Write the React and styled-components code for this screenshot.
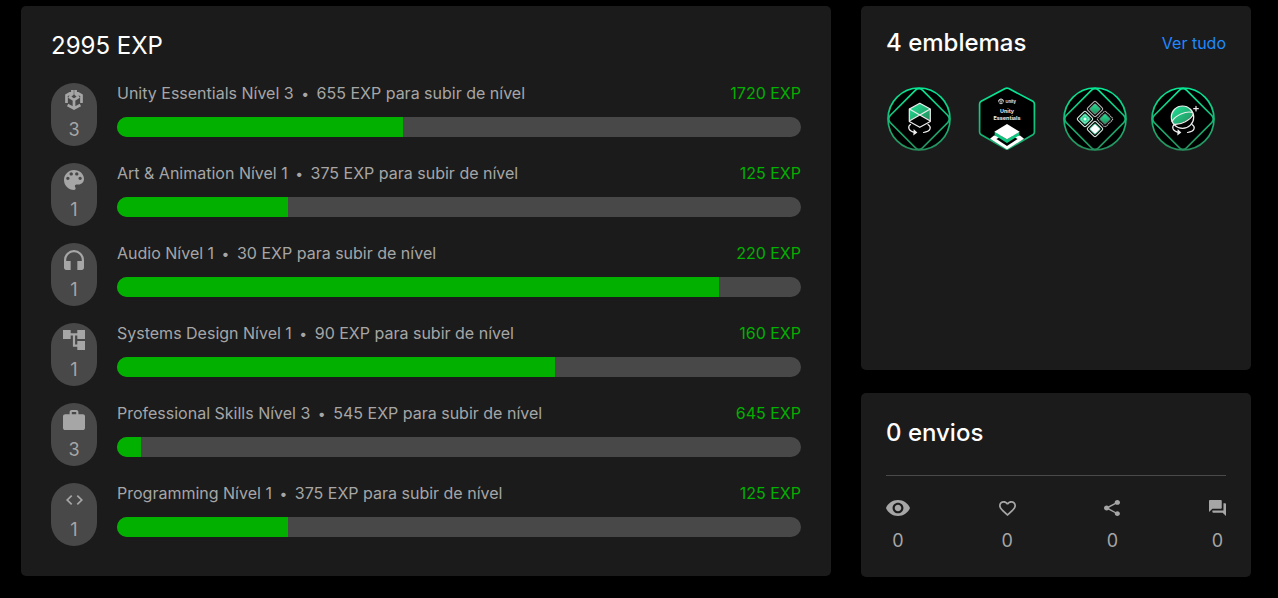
import React from "react";
import styled, { createGlobalStyle } from "styled-components";
import {
  MdHeadphones,
  MdAccountTree,
  MdWork,
  MdCode,
  MdVisibility,
  MdFavoriteBorder,
  MdShare,
  MdForum,
} from "react-icons/md";

const GlobalStyle = createGlobalStyle`
  *, *::before, *::after { box-sizing: border-box; }
  body {
    margin: 0;
    background: #000;
    color: #a6a6a6;
    font-family: Inter, "Liberation Sans", sans-serif;
    font-size: 16px;
    line-height: 20px;
  }
  h2, p, ul, dl, dd { margin: 0; padding: 0; }
  ul { list-style: none; }
  svg { display: block; }
`;

const Page = styled.main`
  display: grid;
  grid-template-columns: 27fr 13fr;
  align-items: start;
  gap: 30px;
  padding: 6px 27px 21px 21px;
`;

const Card = styled.section`
  background: #1b1b1b;
  border-radius: 5px;
  padding: ${(p) => p.$pad || "24px 25px"};
  min-height: ${(p) => p.$minHeight || "0"};
`;

const Side = styled.div`
  display: flex;
  flex-direction: column;
  gap: 23px;
`;

const Title = styled.h2`
  color: #fff;
  font-size: 24px;
  line-height: 30px;
  font-weight: ${(p) => p.$weight || 500};
`;

const SkillList = styled.ul`
  display: flex;
  flex-direction: column;
  gap: 17px;
  margin-top: 22px;
`;

const Skill = styled.li`
  display: flex;
  gap: 20px;
`;

const Pill = styled.div`
  flex: none;
  width: 46px;
  height: 63px;
  border-radius: 23px;
  background: #484848;
  display: flex;
  flex-direction: column;
  align-items: center;
  padding-top: 7px;
  gap: 10px;
  font-size: 18px;
`;

const PillIcon = styled.span`
  display: flex;
  align-items: center;
  height: 20px;
`;

const GlyphBox = styled.span`
  display: block;
  width: ${(p) => p.$w}px;
  height: ${(p) => p.$h}px;

  svg {
    width: 100%;
    height: 100%;
  }
`;

const SkillBody = styled.div`
  flex: 1;
  min-width: 0;
`;

const SkillHeader = styled.div`
  display: flex;
  justify-content: space-between;
  gap: 16px;
`;

const Dot = styled.span`
  font-size: 14px;
  line-height: 1;
  margin: 0 3px;
`;

const Points = styled.span`
  color: #02b000;
  white-space: nowrap;
`;

const Track = styled.div`
  height: 20px;
  margin-top: 14px;
  border-radius: 10px;
  background: #484848;
  overflow: hidden;
`;

const Fill = styled.div`
  height: 100%;
  background: #02b000;
`;

const CardHeader = styled.header`
  display: flex;
  justify-content: space-between;
  align-items: center;
`;

const MoreLink = styled.a`
  color: #2089ff;
  text-decoration: none;
`;

const BadgeRow = styled.ul`
  display: flex;
  flex-wrap: wrap;
  gap: 22px;
  margin-top: 28px;
`;

const BadgeArt = styled.svg`
  width: 66px;
  height: 66px;
`;

const Stats = styled.dl`
  display: flex;
  justify-content: space-between;
  margin-top: 27px;
  padding-top: 22px;
  border-top: 1px solid #4a4a4a;
`;

const Stat = styled.div`
  display: flex;
  flex-direction: column;
  align-items: center;
  gap: 13px;
  font-size: 18px;
`;

const StatIcon = styled.dt`
  display: flex;
  align-items: center;
  height: 20px;
`;

function UnityCube(props) {
  return (
    <svg viewBox="0 0 18 20" fill="none" stroke="currentColor" strokeWidth="2.7" {...props}>
      <path d="M7.4 0V4L5 6.2M7.4 1.8L1.5 5.3V13M10.6 0V4L13 6.2M10.6 1.8L16.5 5.3V13" />
      <path d="M3.8 6.6L9 9.8L14.2 6.6M9 9.8V18M2.6 15L9 18.4L15.4 15" />
    </svg>
  );
}

function Palette(props) {
  return (
    <svg viewBox="3 3 18 18" fill="currentColor" {...props}>
      <path d="M12 3c-4.97 0-9 4.03-9 9s4.03 9 9 9c.83 0 1.5-.67 1.5-1.5 0-.39-.15-.74-.39-1.01-.23-.26-.38-.61-.38-.99 0-.83.67-1.5 1.5-1.5H16c2.76 0 5-2.24 5-5 0-4.42-4.03-8-9-8zm-5.5 9c-.83 0-1.5-.67-1.5-1.5S5.67 9 6.5 9 8 9.67 8 10.5 7.33 12 6.5 12zm3-4C8.67 8 8 7.33 8 6.5S8.67 5 9.5 5s1.5.67 1.5 1.5S10.33 8 9.5 8zm5 0c-.83 0-1.5-.67-1.5-1.5S13.67 5 14.5 5s1.5.67 1.5 1.5S15.33 8 14.5 8zm3 4c-.83 0-1.5-.67-1.5-1.5S16.67 9 17.5 9s1.5.67 1.5 1.5-.67 1.5-1.5 1.5z" />
    </svg>
  );
}

const skills = [
  { name: "Unity Essentials", level: 3, left: 655, exp: 1720, done: 41.8, Icon: UnityCube, w: 18, h: 20 },
  { name: "Art & Animation", level: 1, left: 375, exp: 125, done: 25, Icon: Palette, w: 20, h: 20 },
  { name: "Audio", level: 1, left: 30, exp: 220, done: 88, Icon: MdHeadphones, w: 20, h: 20, box: "3 3 18 18" },
  { name: "Systems Design", level: 1, left: 90, exp: 160, done: 64, Icon: MdAccountTree, w: 22, h: 20, box: "2 3 20 18" },
  { name: "Professional Skills", level: 3, left: 545, exp: 645, done: 3.5, Icon: MdWork, w: 22, h: 20, box: "2 2 20 19" },
  { name: "Programming", level: 1, left: 375, exp: 125, done: 25, Icon: MdCode, w: 17, h: 10, box: "2 6 20 12" },
];

const stats = [
  { label: "Visualizações", Icon: MdVisibility, w: 24, h: 16, box: "1 4.5 22 15" },
  { label: "Curtidas", Icon: MdFavoriteBorder, w: 17, h: 15, box: "2 3 20 18.35" },
  { label: "Compartilhamentos", Icon: MdShare, w: 16, h: 16, box: "3 2 18 20" },
  { label: "Comentários", Icon: MdForum, w: 17, h: 16, box: "2 2 20 20" },
];

function Glyph({ Icon, w, h, box }) {
  const crop = box ? { viewBox: box, preserveAspectRatio: "none" } : {};
  return (
    <GlyphBox $w={w} $h={h}>
      <Icon {...crop} aria-hidden="true" />
    </GlyphBox>
  );
}

function RoundFrame({ id, label, children }) {
  return (
    <BadgeArt viewBox="0 0 66 66" role="img" aria-label={label}>
      <defs>
        <linearGradient id={`${id}-ring`} x1="0" y1="2" x2="0" y2="64" gradientUnits="userSpaceOnUse">
          <stop offset="0" stopColor="#06e895" />
          <stop offset="1" stopColor="#268e5c" />
        </linearGradient>
        <linearGradient id={`${id}-fill`} x1="0" y1="0" x2="1" y2="1">
          <stop offset="0" stopColor="#1fe59a" />
          <stop offset="1" stopColor="#268a58" />
        </linearGradient>
      </defs>
      <circle cx="33" cy="33" r="31" fill="#000" stroke={`url(#${id}-ring)`} strokeWidth="1.7" />
      <path
        d="M29.5 4.2Q33 1.2 36.5 4.2L61.8 29.5Q64.8 33 61.8 36.5L36.5 61.8Q33 64.8 29.5 61.8L4.2 36.5Q1.2 33 4.2 29.5Z"
        fill="none"
        stroke={`url(#${id}-ring)`}
        strokeWidth="1.7"
      />
      {children}
    </BadgeArt>
  );
}

function Orbit() {
  return (
    <g fill="none" stroke="#eee" strokeWidth="1.2" strokeLinecap="round">
      <path d="M24.5 38.5C21.5 40.5 22 45 29 46.3" />
      <path d="M28.2 44.4L30.4 46.4L28 48.2Z" fill="#eee" />
      <path d="M42 38.5C45.8 41 45 45.6 37.5 46.5" />
    </g>
  );
}

function CubeBadge() {
  return (
    <RoundFrame id="cube" label="Cubo">
      <path d="M33.8 17.3L44.3 23V35.5L33.8 41.3L23.3 35.5V23Z" fill="#000" />
      <path d="M33.8 17.3L44.3 23V34.5L33.8 29L23.3 34.5V23Z" fill="url(#cube-fill)" />
      <g fill="none" stroke="#eee" strokeWidth="1.2" strokeLinejoin="round">
        <path d="M33.8 17.3L44.3 23V35.5L33.8 41.3L23.3 35.5V23Z" />
        <path d="M23.3 23L44.3 35M44.3 23L23.3 35" />
      </g>
      <Orbit />
    </RoundFrame>
  );
}

function EssentialsBadge() {
  return (
    <BadgeArt viewBox="0 0 66 66" role="img" aria-label="Unity Essentials">
      <defs>
        <linearGradient id="hex-ring" x1="0" y1="2" x2="0" y2="64" gradientUnits="userSpaceOnUse">
          <stop offset="0" stopColor="#06e895" />
          <stop offset="1" stopColor="#18a568" />
        </linearGradient>
      </defs>
      <path
        d="M31.2 2.6Q33 1.6 34.8 2.6L58.8 15.3Q60.4 16.3 60.4 18V46Q60.4 47.8 58.8 48.8L34.8 62.6Q33 63.6 31.2 62.6L7.2 48.8Q5.6 47.8 5.6 46V18Q5.6 16.3 7.2 15.3Z"
        fill="#000"
        stroke="url(#hex-ring)"
        strokeWidth="1.7"
      />
      <UnityCube x="24" y="12.4" width="6" height="6" color="#e8e8e8" />
      <g fill="#e8e8e8" fontFamily="Inter, sans-serif" fontWeight="700">
        <text x="31.5" y="17" fontSize="4">Unity</text>
        <g fontSize="5.4" textAnchor="middle">
          <text x="33" y="27.3">Unity</text>
          <text x="33" y="33.6">Essentials</text>
        </g>
      </g>
      <path d="M20 49.5L16 52.8L33 63.6L50 52.8L46 49.5Z" fill="#fff" />
      <path d="M33 47L43.6 53L33 60L22.4 53Z" fill="#000" />
      <path d="M20.7 45.7L33 53.3L45.3 45.7V49.2L33 57L20.7 49.2Z" fill="#10c781" />
      <path d="M33 38L45.7 45.7L33 53.3L20.3 45.7Z" fill="#fff" />
    </BadgeArt>
  );
}

function Tile({ x, y, edge, fill, core, dashed }) {
  return (
    <g transform={`translate(${x} ${y}) rotate(45)`}>
      <rect x="-5.9" y="-5.9" width="11.8" height="11.8" rx="1.6" fill="#000" stroke={edge} strokeWidth="1.1" strokeDasharray={dashed ? "1.4 .5" : undefined} />
      <rect x="-3.9" y="-3.9" width="7.8" height="7.8" rx="1" fill={fill} stroke={core} strokeWidth=".8" />
    </g>
  );
}

function TilesBadge() {
  return (
    <RoundFrame id="tiles" label="Blocos">
      <Tile x={33} y={23} edge="#b5b5b5" fill="url(#tiles-fill)" core="#8f9a95" />
      <Tile x={43} y={33} edge="#b5b5b5" fill="url(#tiles-fill)" core="#777" dashed />
      <Tile x={23} y={33} edge="#d5eee3" fill="#2fd797" core="#5fe0b0" />
      <Tile x={33} y={43} edge="#d8e8e1" fill="#fff" core="#36d69a" />
      <circle cx="23" cy="33" r="3.4" fill="none" stroke="#b9f2da" strokeWidth=".9" strokeDasharray="1.2 .5" />
      <circle cx="23" cy="33" r="1.5" fill="#e8fff6" />
    </RoundFrame>
  );
}

function BallBadge() {
  return (
    <RoundFrame id="ball" label="Esfera">
      <circle cx="32.5" cy="31.2" r="11.2" fill="#000" />
      <path d="M23.8 38.2A11.2 11.2 0 1 1 43 27.3C40 34 31 38.6 23.8 38.2Z" fill="url(#ball-fill)" />
      <g fill="none" stroke="#eee" strokeWidth="1.2" strokeLinecap="round">
        <circle cx="32.5" cy="31.2" r="11.2" />
        <path d="M22 35.5C25 29.5 36 24.5 42.6 26.5" />
        <path d="M24.2 38.4C31 39 40.5 34 43.2 28.2" />
        <path d="M46 20.4V25M43.7 22.7H48.3" />
      </g>
      <Orbit />
    </RoundFrame>
  );
}

const badges = [CubeBadge, EssentialsBadge, TilesBadge, BallBadge];

export default function App() {
  return (
    <>
      <GlobalStyle />
      <Page>
        <Card $pad="25px 30px 30px">
          <Title $weight={400}>2995 EXP</Title>
          <SkillList>
            {skills.map((s) => (
              <Skill key={s.name}>
                <Pill>
                  <PillIcon>
                    <Glyph {...s} />
                  </PillIcon>
                  {s.level}
                </Pill>
                <SkillBody>
                  <SkillHeader>
                    <span>
                      {`${s.name} Nível ${s.level} `}
                      <Dot>•</Dot>
                      {` ${s.left} EXP para subir de nível`}
                    </span>
                    <Points>{s.exp} EXP</Points>
                  </SkillHeader>
                  <Track role="progressbar" aria-label={s.name} aria-valuenow={s.done} aria-valuemin={0} aria-valuemax={100}>
                    <Fill style={{ width: `${s.done}%` }} />
                  </Track>
                </SkillBody>
              </Skill>
            ))}
          </SkillList>
        </Card>
        <Side>
          <Card $pad="22px 25px" $minHeight="364px">
            <CardHeader>
              <Title>4 emblemas</Title>
              <MoreLink href="#emblemas">Ver tudo</MoreLink>
            </CardHeader>
            <BadgeRow>
              {badges.map((Badge, i) => (
                <li key={i}>
                  <Badge />
                </li>
              ))}
            </BadgeRow>
          </Card>
          <Card $pad="25px 25px 26px">
            <Title>0 envios</Title>
            <Stats>
              {stats.map((s) => (
                <Stat key={s.label}>
                  <StatIcon aria-label={s.label}>
                    <Glyph {...s} />
                  </StatIcon>
                  <dd>0</dd>
                </Stat>
              ))}
            </Stats>
          </Card>
        </Side>
      </Page>
    </>
  );
}
